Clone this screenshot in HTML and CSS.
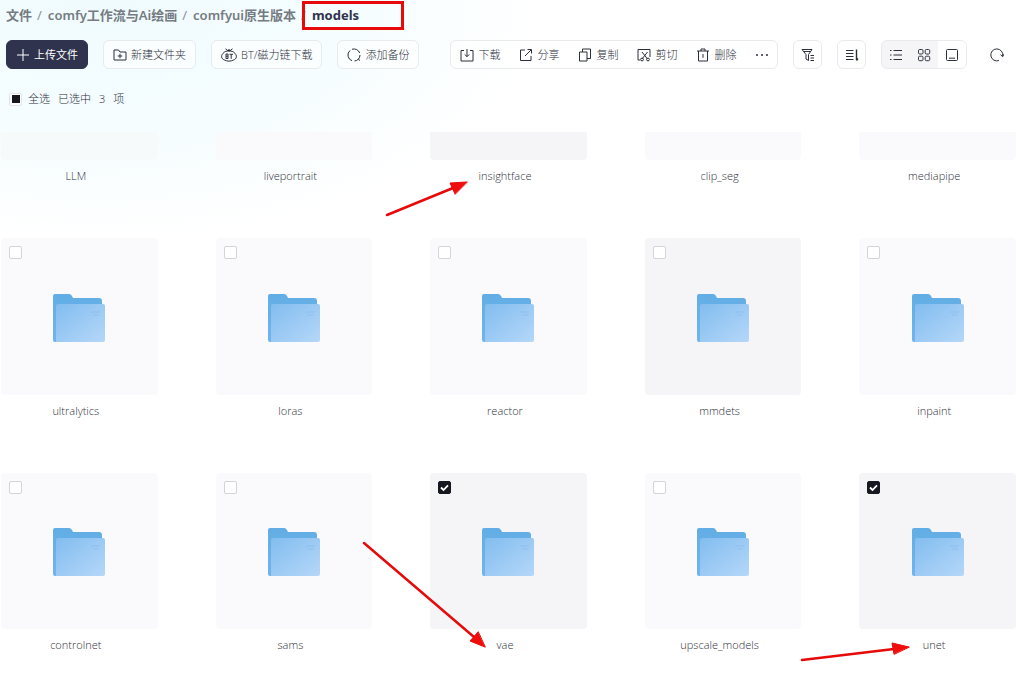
FILE: index.html
```html
<!DOCTYPE html>
<html lang="zh-CN">
<head>
<meta charset="utf-8">
<meta name="viewport" content="width=device-width, initial-scale=1">
<title>models</title>
<link rel="stylesheet" href="styles.css">
</head>
<body>
<svg class="defs" width="0" height="0" aria-hidden="true">
  <defs>
    <linearGradient id="front" x1="0" y1="0" x2="1" y2="1"><stop offset="0" stop-color="#82bdef"/><stop offset="1" stop-color="#b5d7f9"/></linearGradient>
    <linearGradient id="back" x1="0" y1="0" x2="0" y2="1"><stop offset="0" stop-color="#62ade5"/><stop offset="1" stop-color="#72b4ed"/></linearGradient>
    <symbol id="folder" viewBox="0 0 52 49">
      <path d="M0 2Q0 0 2 0H16Q18 0 19 2L20 4H46Q49 4 49 7V48H2Q0 48 0 46Z" fill="url(#back)"/>
      <path d="M3 12Q3 10 5 10H50Q52 10 52 12V46Q52 48 50 48H3Z" fill="url(#front)"/>
      <path d="M38 18H47M40 21H46" stroke="#7fb5e8" stroke-opacity=".5" fill="none"/>
    </symbol>
  </defs>
</svg>
<main class="page">
  <nav class="crumbs" aria-label="路径">
    <a href="#">文件</a><span class="sep">/</span><a href="#">comfy工作流与Ai绘画</a><span class="sep">/</span><a href="#">comfyui原生版本</a><span class="sep">/</span><strong class="current">models<span class="mark"></span></strong>
  </nav>

  <div class="toolbar">
    <button class="btn primary" type="button"><svg class="icon" viewBox="0 0 14 14"><path d="M7 1V13M1 7H13"/></svg>上传文件</button>
    <button class="btn" type="button"><svg class="icon" viewBox="0 0 14 14"><path d="M1 12V2H5.5L7 4H13V12ZM7 5.7V10.3M4.7 8H9.3"/></svg>新建文件夹</button>
    <button class="btn" type="button"><svg class="icon wide" viewBox="0 0 16 14"><path d="M3 4.5C4 2.5 12 2.5 13 4.5C16.5 7 16 11 12.5 12C10 13.5 6 13.5 3.5 12C0 11-.5 7 3 4.5ZM4.5 .8L7.3 3L8 1.3L8.7 3L11.5 .8"/><path d="M5 6V10.5H7V6H5M5 8.2H7M8.5 6.3H12M10.2 6.3V10.8"/></svg>BT/磁力链下载</button>
    <button class="btn" type="button"><svg class="icon" viewBox="0 0 14 14"><path d="M5 12.7A6 6 0 0 1 3 2.5M5 1.3A6 6 0 0 1 12.7 5M13 7A6 6 0 0 1 7.5 13"/><path d="M11.3 11.3L13 12.5"/></svg>添加备份</button>
    <div class="group actions">
      <button type="button"><svg class="icon" viewBox="0 0 14 14"><path d="M4 2.5H1V13H13V2.5H10M7 1V8.5M4.7 6.4L7 8.7L9.3 6.4"/></svg>下载</button>
      <button type="button"><svg class="icon" viewBox="0 0 14 14"><path d="M6 2H1.5V12.5H12V8M6 8L12 2M8.5 1.5H12.5V5.5"/></svg>分享</button>
      <button type="button"><svg class="icon" viewBox="0 0 14 14"><path d="M1.5 4H9V13H1.5ZM4.5 4V1H12.5V10.5H9"/></svg>复制</button>
      <button type="button"><svg class="icon" viewBox="0 0 14 14"><path d="M3 12H1V1.5H13V9M5 4L10.5 11M10.5 4L5 11"/><circle cx="5" cy="11.5" r="1.4"/><circle cx="11" cy="11.5" r="1.4"/></svg>剪切</button>
      <button type="button"><svg class="icon" viewBox="0 0 14 14"><path d="M1 3H13M5 3V1H9V3M2.5 3V13H11.5V3M7 6V9.8"/></svg>删除</button>
      <button type="button" aria-label="更多"><svg class="icon solid" viewBox="0 0 14 14"><circle cx="2" cy="7" r="1"/><circle cx="7" cy="7" r="1"/><circle cx="12" cy="7" r="1"/></svg></button>
    </div>
    <button class="btn square" type="button" aria-label="筛选"><svg class="icon" viewBox="0 0 14 14"><path d="M1 1.5H11L7.5 6.5V12.5L5 11V6.5ZM2.5 3.5H9.5M9.5 7.5H13M9.5 10H13M9.5 12.5H13"/></svg></button>
    <button class="btn square" type="button" aria-label="排序"><svg class="icon" viewBox="0 0 14 14"><path d="M1 2.5H8.5M1 5.5H8.5M1 8.5H8.5M1 11.5H8.5"/><path class="thick" d="M11.5 1.5V12M11.5 12.5L13 10.5"/></svg></button>
    <div class="group views">
      <button type="button" aria-label="列表"><svg class="icon" viewBox="0 0 14 14"><path d="M1 2.5H2.5M1 7H2.5M1 11.5H2.5M4.5 2.5H13M4.5 7H13M4.5 11.5H13"/></svg></button>
      <button type="button" aria-label="网格"><svg class="icon" viewBox="0 0 14 14"><rect x="1.5" y="1.5" width="4.5" height="4.5" rx="1.2"/><rect x="8.2" y="1.5" width="4.5" height="4.5" rx="1.2"/><rect x="1.5" y="8.2" width="4.5" height="4.5" rx="1.2"/><rect x="8.2" y="8.2" width="4.5" height="4.5" rx="1.2"/></svg></button>
      <button class="active" type="button" aria-label="大图"><svg class="icon" viewBox="0 0 14 14"><rect x="1.5" y="1.5" width="11" height="11" rx="1"/><path d="M4 10.2H10"/></svg></button>
    </div>
    <button class="refresh" type="button" aria-label="刷新"><svg class="icon" viewBox="0 0 14 14"><path d="M9 12.5A6 6 0 1 1 12.7 8"/><path d="M10.5 6.7L12.7 8.7L13.8 6.2"/></svg></button>
  </div>

  <div class="selection">
    <label class="all"><input class="tick partial" type="checkbox">全选</label>
    <span>已选中</span><span class="count">3</span><span>项</span>
  </div>

  <section class="files">
    <article class="file"><div class="card cut faint"></div><p class="name">LLM</p></article>
    <article class="file"><div class="card cut"></div><p class="name">liveportrait</p></article>
    <article class="file"><div class="card cut selected"></div><p class="name">insightface</p></article>
    <article class="file"><div class="card cut"></div><p class="name">clip_seg</p></article>
    <article class="file"><div class="card cut"></div><p class="name">mediapipe</p></article>

    <article class="file"><div class="card"><input class="tick" type="checkbox" aria-label="ultralytics"><svg class="folder"><use href="#folder"/></svg></div><p class="name">ultralytics</p></article>
    <article class="file"><div class="card"><input class="tick" type="checkbox" aria-label="loras"><svg class="folder"><use href="#folder"/></svg></div><p class="name">loras</p></article>
    <article class="file"><div class="card"><input class="tick" type="checkbox" aria-label="reactor"><svg class="folder"><use href="#folder"/></svg></div><p class="name">reactor</p></article>
    <article class="file"><div class="card selected"><input class="tick" type="checkbox" aria-label="mmdets"><svg class="folder"><use href="#folder"/></svg></div><p class="name">mmdets</p></article>
    <article class="file"><div class="card"><input class="tick" type="checkbox" aria-label="inpaint"><svg class="folder"><use href="#folder"/></svg></div><p class="name">inpaint</p></article>

    <article class="file"><div class="card"><input class="tick" type="checkbox" aria-label="controlnet"><svg class="folder"><use href="#folder"/></svg></div><p class="name">controlnet</p></article>
    <article class="file"><div class="card"><input class="tick" type="checkbox" aria-label="sams"><svg class="folder"><use href="#folder"/></svg></div><p class="name">sams</p></article>
    <article class="file"><div class="card selected"><input class="tick" type="checkbox" aria-label="vae" checked><svg class="folder"><use href="#folder"/></svg></div><p class="name">vae</p></article>
    <article class="file"><div class="card"><input class="tick" type="checkbox" aria-label="upscale_models"><svg class="folder"><use href="#folder"/></svg></div><p class="name">upscale_models</p></article>
    <article class="file"><div class="card selected"><input class="tick" type="checkbox" aria-label="unet" checked><svg class="folder"><use href="#folder"/></svg></div><p class="name">unet</p></article>
  </section>

  <svg class="arrows" viewBox="0 0 1024 690" aria-hidden="true">
    <path d="M387 215L453 188M364 543L474 637M802 660L894 649"/>
    <path class="head" d="M467 182L450 183L455 194ZM485 647L470 641L478 632ZM909 647L892 643L894 654Z"/>
  </svg>
</main>
</body>
</html>
```
FILE: styles.css
```css
* { box-sizing: border-box; }

body {
  margin: 0;
  background: #fff;
  color: #2c2f3a;
  font: 300 11px/18px "Open Sans", "Noto Sans CJK SC", sans-serif;
}

.defs { position: absolute; }

.page {
  position: relative;
  min-height: 100vh;
  overflow: hidden;
  background:
    radial-gradient(ellipse 440px 240px at 100px 0, #f0fbfe 0, #f5fdff 55%, rgba(255, 255, 255, 0) 100%),
    #fff;
}

button {
  display: flex;
  align-items: center;
  justify-content: center;
  gap: 4px;
  margin: 0;
  padding: 0;
  border: 0;
  background: none;
  color: inherit;
  font: inherit;
  white-space: nowrap;
}

.crumbs {
  display: flex;
  align-items: center;
  height: 30px;
  padding-left: 6px;
  font-family: "Noto Sans", "Noto Sans CJK SC", sans-serif;
  font-size: 13px;
  font-weight: 600;
  white-space: nowrap;
}

.crumbs a { color: #757b82; text-decoration: none; }
.sep { margin: 0 6px 0 5px; color: #8c9298; font-weight: 400; }
.current { position: relative; color: #30334d; font-weight: 700; }

.mark {
  position: absolute;
  top: -5px;
  left: -10px;
  width: 102px;
  height: 29px;
  border: 3px solid #e60a0a;
}

.toolbar {
  display: flex;
  align-items: center;
  margin-top: 10px;
  padding: 0 20px 0 6px;
}

.btn,
.group {
  height: 29px;
  margin-right: 15px;
  border: 1px solid #e8eaed;
  border-radius: 6px;
  background: rgba(255, 255, 255, .6);
}

.btn { padding: 0 9px; }
.primary { border-color: #30334d; background: #30334d; color: #fff; font-weight: 400; }
.square { width: 29px; padding: 0; }

.icon {
  flex: none;
  width: 14px;
  height: 14px;
  fill: none;
  stroke: currentColor;
  stroke-width: 1;
}

.icon.wide { width: 16px; }
.icon.solid { fill: currentColor; stroke: none; }
.icon .thick { stroke-width: 1.4; }

.group { display: flex; align-items: stretch; }
.actions { gap: 19px; margin-left: 16px; padding: 0 8px 0 9px; }
.views { overflow: hidden; background: #f5f5f7; }
.views button { width: 28px; }
.views .active { background: #fff; }
.refresh { height: 29px; margin-left: auto; }

.selection {
  display: flex;
  align-items: center;
  gap: 8px;
  margin: 21px 0 24px;
  padding-left: 9px;
}

.all { display: flex; align-items: center; gap: 6px; }

.tick {
  flex: none;
  width: 13px;
  height: 13px;
  margin: 0;
  border: 1px solid #d3d4d8;
  border-radius: 2px;
  background: #fff;
  appearance: none;
}

.tick.partial {
  border-color: #e2e5e8;
  background: linear-gradient(#16181d, #16181d) center / 8px 8px no-repeat #fff;
}

.tick:checked {
  border-color: #17181f;
  background: #17181f url("data:image/svg+xml,%3Csvg xmlns='http://www.w3.org/2000/svg' viewBox='0 0 11 11'%3E%3Cpath d='M2 5.5L4.5 8L9 3.3' fill='none' stroke='white' stroke-width='1.8'/%3E%3C/svg%3E");
}

.files {
  display: grid;
  grid-template-columns: repeat(5, minmax(0, 1fr));
  gap: 53px 58px;
  padding: 0 8px 20px 1px;
}

.card {
  position: relative;
  display: flex;
  align-items: center;
  justify-content: center;
  aspect-ratio: 1;
  padding-top: 4px;
  border-radius: 4px;
  background: #fafafc;
}

.card.cut { height: 28px; aspect-ratio: auto; border-radius: 0 0 4px 4px; }
.card.faint { background: #f7fafb; }
.card.selected { background: #f5f5f8; }
.card .tick { position: absolute; top: 8px; left: 8px; }
.folder { width: 52px; height: 49px; }

.name {
  margin: 7px 0 0;
  padding-right: 7px;
  color: #30323a;
  text-align: center;
}

.arrows {
  position: absolute;
  top: 0;
  left: 0;
  width: 1024px;
  height: 690px;
  fill: none;
  stroke: #e60a0a;
  stroke-width: 2.5;
  stroke-linecap: round;
  pointer-events: none;
}

.arrows .head { fill: #f20d0d; stroke-width: 1; }
```
